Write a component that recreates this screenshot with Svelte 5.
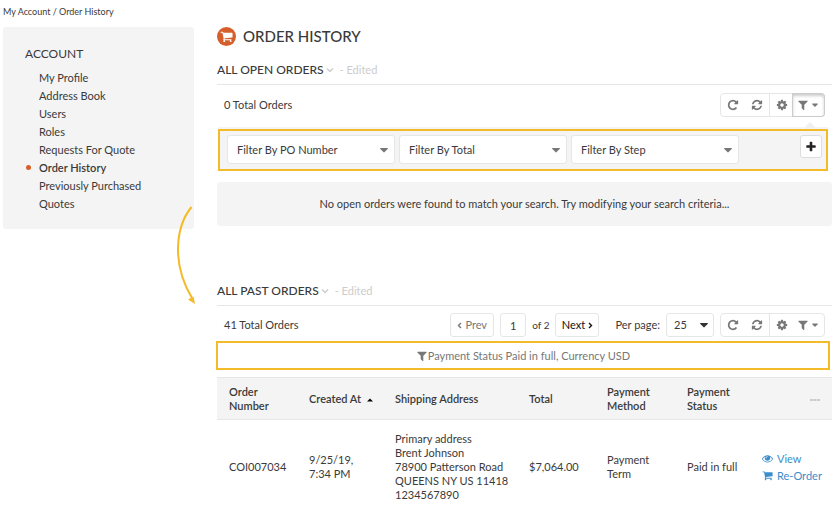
<script>
  const links = ['My Profile', 'Address Book', 'Users', 'Roles', 'Requests For Quote', 'Order History', 'Previously Purchased', 'Quotes'];
  const current = 'Order History';
  const filters = ['PO Number', 'Total', 'Step'];
  const columns = [80, 86, 134, 78, 80, 75, 82];
  const address = ['Primary address', 'Brent Johnson', '78900 Patterson Road', 'QUEENS NY US 11418', '1234567890'];

  const icons = {
    repeat: 'M1664 256v448q0 26-19 45t-45 19h-448q-42 0-59-40-17-39 14-69l138-138q-148-137-349-137-104 0-198.5 40.5t-163.5 109.5-109.5 163.5-40.5 198.5 40.5 198.5 109.5 163.5 163.5 109.5 198.5 40.5q119 0 225-52t179-147q7-10 23-12 15 0 25 9l137 138q9 8 9.5 20.5t-7.5 22.5q-109 132-264 204.5t-327 72.5q-156 0-298-61t-245-164-164-245-61-298 61-298 164-245 245-164 298-61q147 0 284.5 55.5t244.5 156.5l130-129q29-31 70-14 39 17 39 59z',
    refresh: 'M1639 1056q0 5-1 7-64 268-268 434.5t-478 166.5q-146 0-282.5-55t-243.5-157l-129 129q-19 19-45 19t-45-19-19-45v-448q0-26 19-45t45-19h448q26 0 45 19t19 45-19 45l-137 137q71 66 161 102t187 36q134 0 250-65t186-179q11-17 53-117 8-23 30-23h192q13 0 22.5 9.5t9.5 22.5zm25-800v448q0 26-19 45t-45 19h-448q-26 0-45-19t-19-45 19-45l138-138q-148-137-349-137-134 0-250 65t-186 179q-11 17-53 117-8 23-30 23h-199q-13 0-22.5-9.5t-9.5-22.5v-7q65-268 270-434.5t480-166.5q146 0 284 55.5t245 156.5l130-129q19-19 45-19t45 19 19 45z',
    cog: 'M1152 896q0-106-75-181t-181-75-181 75-75 181 75 181 181 75 181-75 75-181zm512-109v222q0 12-8 23t-20 13l-185 28q-19 54-39 91 35 50 107 138 10 12 10 25t-9 23q-27 37-99 108t-94 71q-12 0-26-9l-138-108q-44 23-91 38-16 136-29 186-7 28-36 28h-222q-14 0-24.5-8.5t-11.5-21.5l-28-184q-49-16-90-37l-141 107q-10 9-25 9-14 0-25-11-126-114-165-168-7-10-7-23 0-12 8-23 15-21 51-66.5t54-70.5q-27-50-41-99l-183-27q-13-2-21-12.5t-8-23.5v-222q0-12 8-23t19-13l186-28q14-46 39-92-40-57-107-138-10-12-10-24 0-10 9-23 26-36 98.5-107.5t94.5-71.5q13 0 26 10l138 107q44-23 91-38 16-136 29-186 7-28 36-28h222q14 0 24.5 8.5t11.5 21.5l28 184q49 16 90 37l142-107q9-9 24-9 13 0 25 10 129 119 165 170 7 8 7 22 0 12-8 23-15 21-51 66.5t-54 70.5q26 50 41 98l183 28q13 2 21 12.5t8 23.5z',
    filter: 'M1595 295q17 41-14 70l-493 493v742q0 42-39 59-13 5-25 5-27 0-45-19l-256-256q-19-19-19-45v-486l-493-493q-31-29-14-70 17-39 59-39h1280q42 0 59 39z',
    eye: 'M1664 960q-152-236-381-353 61 104 61 225 0 185-131.5 316.5t-316.5 131.5-316.5-131.5-131.5-316.5q0-121 61-225-229 117-381 353 133 205 333.5 326.5t434.5 121.5 434.5-121.5 333.5-326.5zm-720-384q0-20-14-34t-34-14q-125 0-214.5 89.5t-89.5 214.5q0 20 14 34t34 14 34-14 14-34q0-86 61-147t147-61q20 0 34-14t14-34zm848 384q0 34-20 69-140 230-376.5 368.5t-499.5 138.5-499.5-139-376.5-368q-20-35-20-69t20-69q140-229 376.5-368t499.5-139 499.5 139 376.5 368q20 35 20 69z',
    cart: 'M704 1536q0 52-38 90t-90 38-90-38-38-90 38-90 90-38 90 38 38 90zm896 0q0 52-38 90t-90 38-90-38-38-90 38-90 90-38 90 38 38 90zm128-1088v512q0 24-16.5 42.5t-40.5 21.5l-1044 122q13 60 13 70 0 16-24 64h920q26 0 45 19t19 45-19 45-45 19h-1024q-26 0-45-19t-19-45q0-11 8-31.5t16-36 21.5-40 15.5-29.5l-177-823h-204q-26 0-45-19t-19-45 19-45 45-19h256q16 0 28.5 6.5t19.5 15.5 13 24.5 8 26 5.5 29.5 4.5 26h1201q26 0 45 19t19 45z',
    plus: 'M1600 736v192q0 40-28 68t-68 28h-416v416q0 40-28 68t-68 28h-192q-40 0-68-28t-28-68v-416h-416q-40 0-68-28t-28-68v-192q0-40 28-68t68-28h416v-416q0-40 28-68t68-28h192q40 0 68 28t28 68v416h416q40 0 68 28t28 68z',
    caret: 'M1408 704q0 26-19 45l-448 448q-19 19-45 19t-45-19l-448-448q-19-19-19-45t19-45 45-19h896q26 0 45 19t19 45z'
  };
</script>

{#snippet icon(name, size = 12)}
  <svg class="icon" width={size} height={size} viewBox="0 0 1792 1792" aria-hidden="true"><path d={icons[name]} /></svg>
{/snippet}

{#snippet chevron(d, w, h)}
  <svg class="chevron" width={w} height={h} viewBox="0 0 {w} {h}" aria-hidden="true"><path {d} /></svg>
{/snippet}

{#snippet heading(text)}
  <div class="heading">
    <h2>{text}</h2>
    <button class="toggle" aria-label="Choose view">{@render chevron('M1 1.5L4 4.5L7 1.5', 8, 6)}</button>
    <span class="edited">- Edited</span>
  </div>
{/snippet}

{#snippet tools(open)}
  <div class="tools">
    <button aria-label="Reset">{@render icon('repeat')}</button>
    <button aria-label="Refresh">{@render icon('refresh')}</button>
    <button class="split" aria-label="Settings">{@render icon('cog')}</button>
    <button class="wide" class:open aria-label="Filters">{@render icon('filter')}{@render icon('caret', 10)}</button>
  </div>
{/snippet}

<div class="page">
  <nav class="crumbs" aria-label="Breadcrumb"><a href="#account">My Account</a> / <a href="#history">Order History</a></nav>
  <div class="layout">
    <aside>
      <nav class="side" aria-label="Account">
        <h3>ACCOUNT</h3>
        <ul>
          {#each links as link}
            <li class:current={link === current}><a href="#account">{link}</a></li>
          {/each}
        </ul>
      </nav>
      <svg class="arrow" width="24" height="102" viewBox="0 0 24 102" aria-hidden="true">
        <path d="M18.5 2C3 21-2 58 19 93" fill="none" stroke="#f3bb2a" stroke-width="2" />
        <path d="M15 94.500L20.500 91.500L22 99Z" fill="#f3bb2a" />
      </svg>
    </aside>

    <main>
      <div class="title">
        <span class="badge">{@render icon('cart', 13)}</span>
        <h1>ORDER HISTORY</h1>
      </div>

      <section>
        {@render heading('ALL OPEN ORDERS')}
        <div class="bar">
          <span class="count">0 Total Orders</span>
          {@render tools(true)}
        </div>
        <div class="filters">
          {#each filters as f}
            <div class="select">
              <select aria-label="Filter By {f}"><option>Filter By {f}</option></select>
              {@render icon('caret', 14)}
            </div>
          {/each}
          <button class="add" aria-label="Add filter">{@render icon('plus', 12)}</button>
        </div>
        <p class="empty">No open orders were found to match your search. Try modifying your search criteria...</p>
      </section>

      <section class="past">
        {@render heading('ALL PAST ORDERS')}
        <div class="bar">
          <span class="count">41 Total Orders</span>
          <div class="pager">
            <button class="prev">{@render chevron('M4 1L1.5 3.500L4 6', 5, 7)} Prev</button>
            <input id="page" aria-label="Page" value="1" />
            <label class="of" for="page">of 2</label>
            <button class="next">Next {@render chevron('M1 1L3.500 3.500L1 6', 5, 7)}</button>
          </div>
          <label class="per" for="per">Per page:</label>
          <div class="select size">
            <select id="per"><option>25</option></select>
            {@render icon('caret', 14)}
          </div>
          {@render tools(false)}
        </div>
        <p class="active">{@render icon('filter', 12)}Payment Status Paid in full, Currency USD</p>
        <table>
          <colgroup>{#each columns as w}<col style:width="{w}px" />{/each}</colgroup>
          <thead>
            <tr>
              <th>Order Number</th>
              <th>Created At <svg class="sort" width="6" height="4" viewBox="0 0 6 4" aria-hidden="true"><path d="M0 3.500L3 .5L6 3.500Z" /></svg></th>
              <th>Shipping Address</th>
              <th>Total</th>
              <th>Payment Method</th>
              <th>Payment Status</th>
              <th class="more"><svg width="10" height="2" viewBox="0 0 10 2" role="img" aria-label="More"><path d="M0 0h3v2h-3zM3.500 0h3v2h-3zM7 0h3v2h-3z" /></svg></th>
            </tr>
          </thead>
          <tbody>
            <tr>
              <td>COI007034</td>
              <td>9/25/19, 7:34 PM</td>
              <td>{#each address as line}<div>{line}</div>{/each}</td>
              <td>$7,064.00</td>
              <td>Payment Term</td>
              <td>Paid in full</td>
              <td class="actions">
                <a href="#view">{@render icon('eye', 11)}View</a>
                <a href="#reorder">{@render icon('cart', 11)}Re-Order</a>
              </td>
            </tr>
          </tbody>
        </table>
      </section>
    </main>
  </div>
</div>

<style>
  .page, .page * { box-sizing: border-box; }
  .page {
    font: 11px/14px Lato, sans-serif;
    color: #3a3a3a;
    background: #fff;
    padding: 4px 2px 0 3px;
  }
  h1, h2, h3, p, ul { margin: 0; padding: 0; }
  a { color: inherit; text-decoration: none; }
  button, input, select { font: inherit; color: inherit; margin: 0; background: #fff; border: 1px solid #e6e6e6; border-radius: 3px; }
  button { padding: 0; display: flex; align-items: center; justify-content: center; }
  .icon { fill: currentColor; display: block; flex: none; }
  .chevron { fill: none; stroke: currentColor; stroke-width: 1.4; flex: none; }

  .crumbs { font-size: 9px; line-height: 16px; }
  .layout { display: flex; gap: 23px; align-items: flex-start; padding-top: 7px; }
  aside { width: 191px; flex: none; position: relative; }
  .side { background: #f4f4f4; border-radius: 3px; padding: 18px 22px 16px; }
  h3 { font-size: 12px; font-weight: 400; line-height: 18px; }
  ul { list-style: none; padding: 6px 0 0 14px; }
  li { line-height: 18px; position: relative; }
  .current { font-weight: 600; }
  .current::before { content: ''; position: absolute; left: -13px; top: 6px; width: 5px; height: 5px; border-radius: 50%; background: #d55f2a; }
  .arrow { position: absolute; top: 178px; right: -3px; }

  main { flex: 1; min-width: 0; }
  .title { display: flex; align-items: center; gap: 7px; height: 19px; }
  .badge { width: 19px; height: 19px; border-radius: 50%; background: #d55f2a; color: #fff; display: grid; place-items: center; }
  h1 { font-size: 15px; font-weight: 500; line-height: 19px; }
  .heading { display: flex; align-items: center; height: 31px; padding-top: 2px; border-bottom: 1px solid #e6e6e6; color: #ccc; }
  section { padding-top: 8px; }
  h2 { font-size: 12px; font-weight: 500; color: #3a3a3a; }
  .toggle { border: 0; background: none; width: 13px; height: 14px; }
  .edited { padding-left: 3px; }

  .bar { display: flex; align-items: center; padding: 8px 7px 4px; }
  .count { flex: 1; }
  .tools { display: flex; height: 24px; border: 1px solid #e6e6e6; border-radius: 4px; color: #777; margin-left: 6px; }
  .tools button { border: 0; width: 24px; height: 22px; background: none; }
  .tools .split { border-left: 1px solid #e6e6e6; border-radius: 0; }
  .tools .wide { width: 31px; gap: 1px; }
  .tools .open { background: #fff; border-radius: 0 3px 3px 0; box-shadow: inset 0 2px 3px #ccc, 0 0 0 1px #ccc; }

  .filters { display: flex; align-items: flex-start; gap: 4px; background: #f4f4f4; border: 2px solid #f3bb2a; box-shadow: 0 -2px #f4f4f4; padding: 4px 4px 5px 7px; margin: 8px 4px 0 1px; position: relative; }
  .filters::before { content: ''; position: absolute; right: 10px; top: -9px; border: 6px solid transparent; border-top: 0; border-bottom-color: #f0f0f0; }
  .select { position: relative; width: 168px; }
  select { appearance: none; width: 100%; height: 29px; padding: 0 24px 0 9px; display: block; }
  .select .icon { position: absolute; right: 4px; top: 8px; color: #777; pointer-events: none; }
  .add { width: 22px; height: 23px; margin-left: auto; color: #222; border-color: #ddd; }
  .empty { background: #f4f4f4; border-radius: 3px; text-align: center; padding: 15px; margin-top: 11px; }

  .past { padding-top: 49px; }
  .past .bar { padding-top: 7px; }
  .pager { display: flex; align-items: center; gap: 6px; margin-right: 16px; }
  .pager button { height: 24px; width: 44px; gap: 3px; }
  .prev { color: #777; }
  .next { color: #111; }
  input { width: 26px; height: 24px; text-align: center; padding: 0; }
  .of { font-size: 10px; }
  .per { margin-right: 6px; }
  .size { width: 48px; }
  .size select { height: 24px; padding-left: 7px; }
  .size .icon { top: 5px; color: #333; right: 3px; }
  .active { display: flex; align-items: center; justify-content: center; border: 2px solid #f3bb2a; margin: 0 2px 0 -1px; height: 29px; color: #777; }

  table { width: 100%; table-layout: fixed; border-collapse: collapse; margin-top: 7px; }
  th, td { text-align: left; padding: 7px 8px 6px 12px; vertical-align: middle; }
  th { font-weight: 600; background: #f4f4f4; border-top: 1px solid #e6e6e6; border-bottom: 1px solid #e6e6e6; }
  td { padding: 12px 8px 4px 12px; }
  .sort { margin-left: 3px; vertical-align: middle; }
  .more { text-align: right; padding-right: 12px; }
  .more svg { fill: #ccc; vertical-align: middle; }
  .actions { color: #3c8dcb; padding-right: 0; }
  .actions a { display: flex; align-items: center; gap: 4px; line-height: 17px; }
</style>
